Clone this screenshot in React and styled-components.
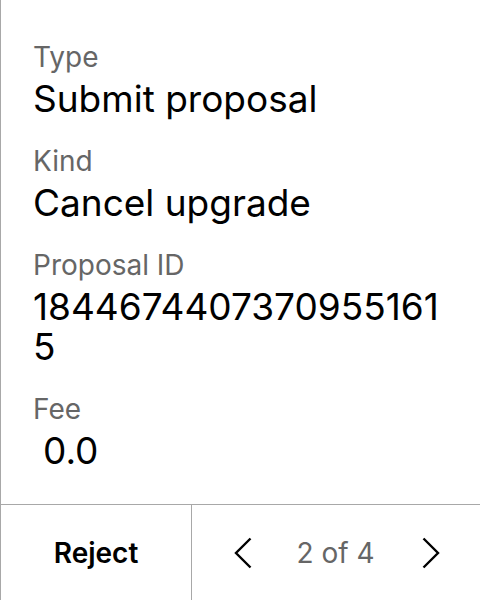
import React from 'react';
import styled, { createGlobalStyle } from 'styled-components';

const GlobalStyle = createGlobalStyle`
    html, body {
        margin: 0;
        padding: 0;
        background: #ffffff;
    }
    body {
        font-family: Inter, "Noto Sans", sans-serif;
    }
`;

const Panel = styled.div`
    width: 480px;
    height: 600px;
    box-sizing: border-box;
    border-left: 1px solid #a8a8a8;
    display: flex;
    flex-direction: column;
    background: #ffffff;
`;

const Details = styled.div`
    flex: 1;
    padding: 40px 24px 0 32px;
    display: flex;
    flex-direction: column;
    gap: 25px;
`;

const Field = styled.div`
    display: flex;
    flex-direction: column;
    gap: 5px;
`;

const Label = styled.div`
    font-size: 28px;
    line-height: 34px;
    color: #666666;
`;

const Value = styled.div`
    font-size: 37px;
    line-height: 40px;
    color: #000000;
    word-break: break-all;
    padding-left: ${({ indent }) => (indent ? '10px' : '0')};
`;

const Footer = styled.div`
    height: 95px;
    border-top: 1px solid #a8a8a8;
    display: grid;
    grid-template-columns: 191px 1fr;
`;

const RejectButton = styled.button`
    border: none;
    border-right: 1px solid #a8a8a8;
    background: transparent;
    font-family: Inter, sans-serif;
    font-size: 28px;
    font-weight: 600;
    color: #000000;
    padding: 0;
    cursor: pointer;
`;

const Pager = styled.div`
    display: flex;
    align-items: center;
    justify-content: center;
    gap: 44px;
    padding-left: 2px;
`;

const PagerButton = styled.button`
    border: none;
    background: transparent;
    padding: 0;
    display: flex;
    align-items: center;
    cursor: pointer;
`;

const PageCount = styled.span`
    font-size: 28px;
    color: #666666;
    margin-right: 3px;
`;

const Chevron = ({ dir }) => (
    <svg width="18" height="32" viewBox="0 0 18 32" fill="none">
        <path
            d={dir === 'left' ? 'M16.5 1.5 L2 16 L16.5 30.5' : 'M1.5 1.5 L16 16 L1.5 30.5'}
            stroke="#000"
            strokeWidth="2.4"
        />
    </svg>
);

const fields = [
    { label: 'Type', value: 'Submit proposal' },
    { label: 'Kind', value: 'Cancel upgrade' },
    { label: 'Proposal ID', value: '18446744073709551615' },
    { label: 'Fee', value: '0.0', indent: true },
];

const App = () => {
    return (
        <>
            <GlobalStyle />
            <Panel>
                <Details>
                    {fields.map((f) => (
                        <Field key={f.label}>
                            <Label>{f.label}</Label>
                            <Value indent={f.indent}>{f.value}</Value>
                        </Field>
                    ))}
                </Details>
                <Footer>
                    <RejectButton>Reject</RejectButton>
                    <Pager>
                        <PagerButton><Chevron dir="left" /></PagerButton>
                        <PageCount>2 of 4</PageCount>
                        <PagerButton><Chevron dir="right" /></PagerButton>
                    </Pager>
                </Footer>
            </Panel>
        </>
    );
};

export default App;
